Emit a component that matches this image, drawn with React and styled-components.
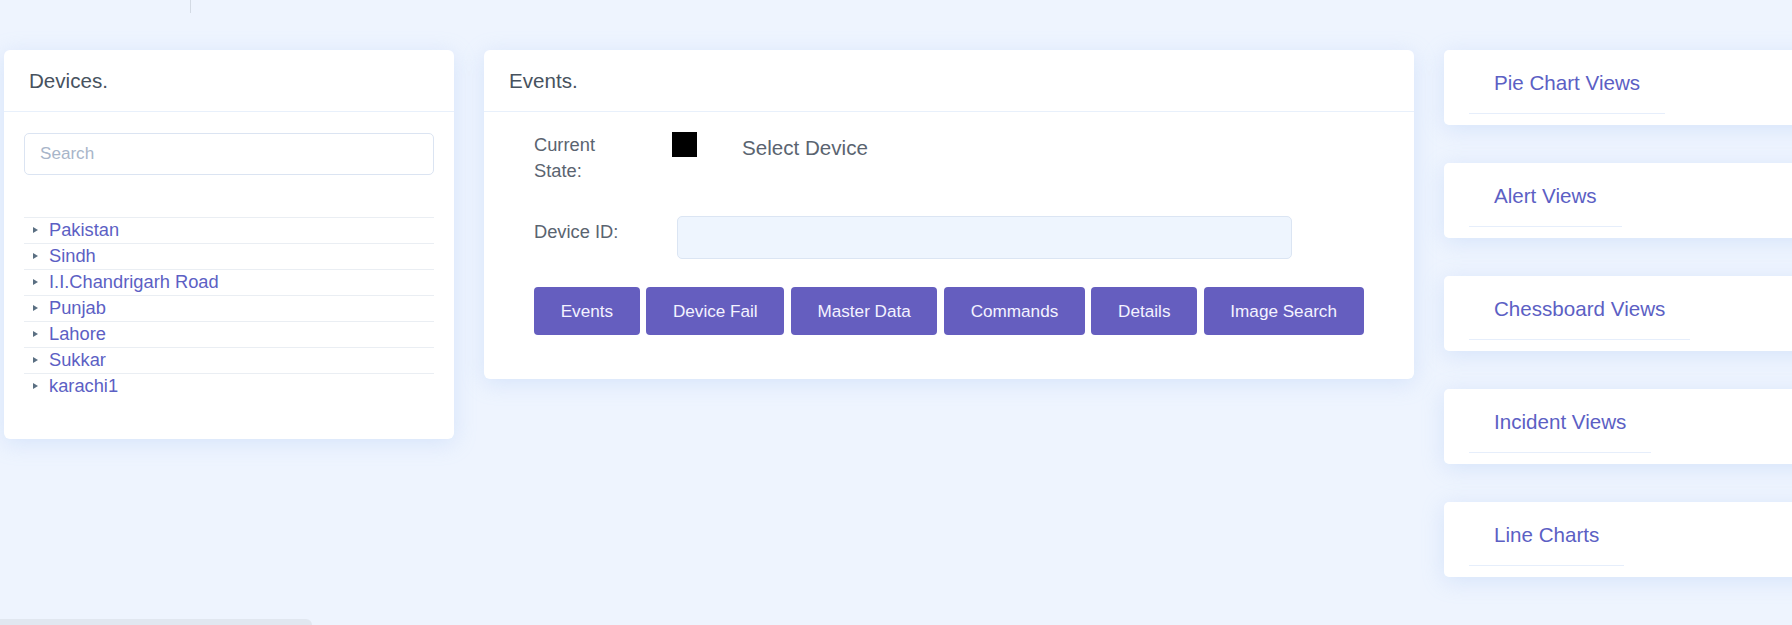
import React from "react";
import styled, { createGlobalStyle } from "styled-components";

const Global = createGlobalStyle`
  html, body { margin: 0; padding: 0; }
  body {
    background: #eef4fe;
    font-family: "Liberation Sans", Arial, sans-serif;
    overflow: hidden;
  }
  * { box-sizing: border-box; }
`;

const Page = styled.div`
  width: 1792px;
  height: 625px;
  overflow: hidden;
  background: #eef4fe;
`;

const TopBar = styled.div`
  height: 50px;
  padding-left: 190px;
  display: flex;
  align-items: flex-start;
`;

const TopTick = styled.div`
  width: 1px;
  height: 13px;
  background: #d3dae4;
`;

const Columns = styled.div`
  display: flex;
  align-items: flex-start;
  gap: 30px;
  padding-left: 4px;
`;

const Card = styled.div`
  flex: 0 0 ${(p) => p.$w}px;
  width: ${(p) => p.$w}px;
  background: #fff;
  border-radius: 6px;
  box-shadow: 0 4px 22px rgba(150, 185, 240, 0.28);
`;

const CardHeader = styled.div`
  height: 62px;
  display: flex;
  align-items: center;
  padding: 0 25px;
  border-bottom: 1px solid #e8f0fb;
  font-size: 20.6px;
  color: #47525e;
`;

const DevicesBody = styled.div`
  padding: 21px 20px 40px;
`;

const SearchInput = styled.input`
  width: 100%;
  height: 42px;
  border: 1px solid #dbe4f2;
  border-radius: 5px;
  padding: 0 15px;
  font-family: "Liberation Sans", Arial, sans-serif;
  font-size: 17.1px;
  color: #444;
  outline: none;
  &::placeholder { color: #a8b5c9; }
`;

const TreeList = styled.ul`
  list-style: none;
  margin: 42px 0 0;
  padding: 0;
`;

const TreeItem = styled.li`
  height: 26px;
  display: flex;
  align-items: center;
  border-top: 1px solid #eaeef3;
  padding: 0 0 2px 9px;
  font-size: 18.3px;
  color: #5c5fc4;
`;

const Caret = styled.span`
  width: 0;
  height: 0;
  border-top: 3px solid transparent;
  border-bottom: 3px solid transparent;
  border-left: 5px solid #5a6f82;
  margin-right: 11px;
`;

const EventsBody = styled.div`
  padding: 20px 50px 44px;
`;

const StateRow = styled.div`
  display: flex;
  align-items: flex-start;
`;

const FieldLabel = styled.div`
  flex: 0 0 ${(p) => p.$w}px;
  padding-right: ${(p) => p.$pr || 0}px;
  padding-top: ${(p) => p.$pt || 0}px;
  font-size: 18.3px;
  line-height: 26px;
  color: #5a6470;
`;

const StateSquare = styled.div`
  width: 25px;
  height: 25px;
  background: #000;
  margin-right: 45px;
`;

const StateText = styled.div`
  margin-top: 3px;
  font-size: 20.6px;
  line-height: 26px;
  color: #5a6470;
`;

const IdRow = styled.div`
  display: flex;
  align-items: flex-start;
  margin-top: 32px;
`;

const IdInput = styled.input`
  width: 615px;
  height: 43px;
  background: #eef5fe;
  border: 1px solid #dbe5f3;
  border-radius: 5px;
  outline: none;
`;

const ButtonRow = styled.div`
  display: flex;
  gap: 6.5px;
  margin-top: 28px;
`;

const ActionButton = styled.button`
  height: 48px;
  padding: 0 26.7px;
  border: none;
  border-radius: 4px;
  background: #655ebf;
  color: #f4f3ff;
  font-family: "Liberation Sans", Arial, sans-serif;
  font-size: 17.14px;
  cursor: pointer;
`;

const SideColumn = styled.div`
  flex: 0 0 450px;
  display: flex;
  flex-direction: column;
  gap: 38px;
`;

const ViewCard = styled.div`
  height: 75px;
  background: #fff;
  border-radius: 5px;
  padding: 20px 0 0 25px;
  box-shadow: 0 4px 22px rgba(150, 185, 240, 0.28);
`;

const ViewLink = styled.a`
  display: inline-block;
  padding: 0 25px 17px;
  line-height: 26px;
  font-size: 20.6px;
  color: #5c5fc4;
  text-decoration: none;
  border-bottom: 1px solid #e6eefb;
`;

const ScrollThumb = styled.div`
  position: fixed;
  left: 0;
  bottom: 0;
  width: 312px;
  height: 6px;
  background: #e1e7f0;
  border-top-right-radius: 6px;
`;

const devices = ["Pakistan", "Sindh", "I.I.Chandrigarh Road", "Punjab", "Lahore", "Sukkar", "karachi1"];
const actions = ["Events", "Device Fail", "Master Data", "Commands", "Details", "Image Search"];
const views = ["Pie Chart Views", "Alert Views", "Chessboard Views", "Incident Views", "Line Charts"];

export default function App() {
  return (
    <Page>
      <Global />
      <TopBar>
        <TopTick />
      </TopBar>
      <Columns>
        <Card $w={450}>
          <CardHeader>Devices.</CardHeader>
          <DevicesBody>
            <SearchInput placeholder="Search" />
            <TreeList>
              {devices.map((d) => (
                <TreeItem key={d}>
                  <Caret />
                  {d}
                </TreeItem>
              ))}
            </TreeList>
          </DevicesBody>
        </Card>
        <Card $w={930}>
          <CardHeader>Events.</CardHeader>
          <EventsBody>
            <StateRow>
              <FieldLabel $w={138} $pr={30}>Current State:</FieldLabel>
              <StateSquare />
              <StateText>Select Device</StateText>
            </StateRow>
            <IdRow>
              <FieldLabel $w={143} $pt={3}>Device ID:</FieldLabel>
              <IdInput />
            </IdRow>
            <ButtonRow>
              {actions.map((a) => (
                <ActionButton key={a}>{a}</ActionButton>
              ))}
            </ButtonRow>
          </EventsBody>
        </Card>
        <SideColumn>
          {views.map((v) => (
            <ViewCard key={v}>
              <ViewLink href="#">{v}</ViewLink>
            </ViewCard>
          ))}
        </SideColumn>
      </Columns>
      <ScrollThumb />
    </Page>
  );
}
